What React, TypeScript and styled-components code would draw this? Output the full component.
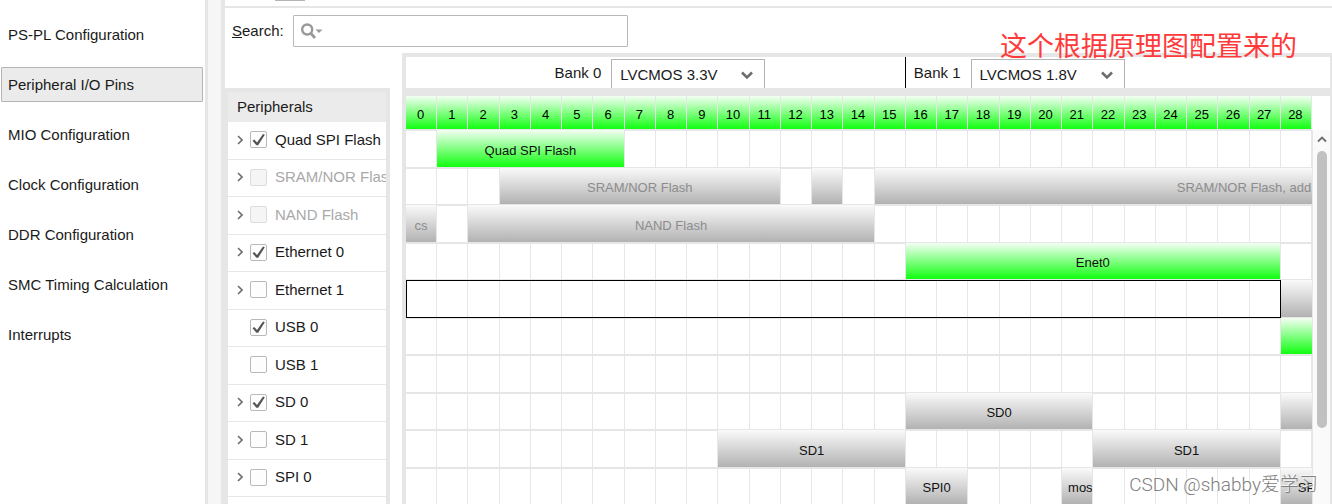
import React from "react";
import styled, { createGlobalStyle, css } from "styled-components";

const LINE = "#e6e6e6";
const COLUMNS = 29;

const GlobalStyle = createGlobalStyle`
  *, *::before, *::after { box-sizing: border-box; }
  body {
    margin: 0;
    background: #fff;
    color: #1a1a1a;
    font: 15px/20px "Liberation Sans", Arial, "Noto Sans CJK SC", sans-serif;
    overflow: hidden;
  }
  button, input, select { font: inherit; color: inherit; }
`;

const Page = styled.div`
  position: relative;
  display: flex;
  height: 100vh;
  overflow: hidden;
`;

const Nav = styled.nav`
  flex: 0 0 205px;
  display: flex;
  flex-direction: column;
  gap: 15px;
  padding: 17px 2px 0 1px;
`;

const NavItem = styled.button<{ $active?: boolean }>`
  height: 35px;
  padding: 0 6px;
  text-align: left;
  white-space: nowrap;
  border: 1px solid ${(p) => (p.$active ? "#b4b4b4" : "transparent")};
  border-radius: 1px;
  background: ${(p) => (p.$active ? "#ebebeb" : "transparent")};
`;

const Splitter = styled.div`
  flex: 0 0 20px;
  background: #f6f6f6;
  border-left: 3px solid ${LINE};
  border-right: 4px solid ${LINE};
`;

const Main = styled.main`
  flex: 1;
  min-width: 0;
  display: flex;
  flex-direction: column;
`;

const TopStrip = styled.div`
  flex: 0 0 8px;
  border-bottom: 2px solid ${LINE};
  padding-left: 50px;
`;

const ToolEdge = styled.div`
  width: 30px;
  height: 1px;
  background: #b4b4b4;
`;

const SearchRow = styled.div`
  flex: 0 0 45px;
  display: flex;
  align-items: center;
  gap: 9px;
  padding: 0 8px 0 7px;
`;

const SearchLabel = styled.label`
  white-space: nowrap;
`;

const SearchBox = styled.div`
  display: flex;
  align-items: center;
  width: 335px;
  height: 32px;
  padding-left: 6px;
  border: 1px solid #b8b8b8;
  border-radius: 1px;
`;

const SearchInput = styled.input`
  flex: 1;
  min-width: 0;
  border: 0;
  outline: 0;
  background: transparent;
`;

const Panels = styled.div`
  flex: 1;
  min-height: 0;
  display: flex;
  gap: 12px;
`;

const PeripheralPanel = styled.section`
  flex: 0 0 165px;
  margin-top: 35px;
  border: solid ${LINE};
  border-width: 4px 4px 0 3px;
  overflow: hidden;
`;

const PeripheralTitle = styled.h2`
  height: 30px;
  margin: 0;
  padding: 0 9px;
  font-size: 15px;
  line-height: 30px;
  font-weight: 400;
  background: #ebebeb;
`;

const PeripheralList = styled.ul`
  display: grid;
  grid-auto-rows: 38px 37px;
  margin: 0;
  padding: 0;
  list-style: none;
`;

const PeripheralRow = styled.li`
  display: grid;
  grid-template-columns: 6px 17px 1fr;
  align-items: center;
  column-gap: 7px;
  padding: 0 0 2px 9px;
  overflow: hidden;
  border-bottom: 1px solid ${LINE};
`;

const Expander = styled.button`
  display: flex;
  padding: 0;
  border: 0;
  background: none;
`;

const CheckBox = styled.input`
  appearance: none;
  grid-column: 2;
  width: 17px;
  height: 17px;
  margin: 0;
  border: 1px solid #b9b9b9;
  border-radius: 2px;
  background: #fdfdfd;
  &:disabled {
    border-color: #dcdcdc;
    background: #f5f5f5;
  }
  &:checked::after {
    content: "";
    display: block;
    width: 15px;
    height: 15px;
    background: #555;
    clip-path: polygon(10% 58%, 22% 50%, 40% 70%, 80% 14%, 92% 18%, 48% 88%, 36% 88%);
  }
`;

const PeripheralName = styled.label<{ $disabled?: boolean }>`
  padding-left: 1px;
  white-space: nowrap;
  color: ${(p) => (p.$disabled ? "#a9a9a9" : "inherit")};
`;

const PinPanel = styled.section`
  flex: 1;
  min-width: 0;
  display: flex;
  flex-direction: column;
  border: solid ${LINE};
  border-width: 4px 2px 0 4px;
`;

const BankBar = styled.div`
  flex: 0 0 39px;
  display: grid;
  grid-template-columns: 16fr 13fr;
  padding-right: 18px;
  border-bottom: 8px solid ${LINE};
`;

const Bank = styled.div<{ $divided?: boolean }>`
  display: flex;
  align-items: center;
  gap: 10px;
  padding-left: 8px;
  ${(p) =>
    p.$divided
      ? css`
          margin-left: -1px;
          border-left: 1px solid #000;
        `
      : css`
          justify-content: center;
        `}
`;

const SelectBox = styled.div`
  display: grid;
  align-self: end;
  width: 154px;
  height: 29px;
  & > * { grid-area: 1 / 1; }
  & > svg {
    align-self: center;
    justify-self: end;
    margin: 4px 12px 0 0;
    pointer-events: none;
  }
`;

const Select = styled.select`
  appearance: none;
  width: 100%;
  padding: 2px 30px 0 8px;
  border: solid #b4b4b4;
  border-width: 1px 1px 0;
  border-radius: 0;
  background: #fff;
`;

const PinArea = styled.div`
  flex: 1;
  min-height: 0;
  display: flex;
  overflow: hidden;
`;

const PinTable = styled.table`
  display: block;
  flex: 1;
  min-width: 0;
  overflow: hidden;
  font-size: 13px;
  line-height: 16px;
  thead { display: block; }
  tbody {
    display: grid;
    grid-auto-rows: 38px 37px;
  }
`;

const PinRow = styled.tr<{ $selected?: boolean }>`
  position: relative;
  display: grid;
  grid-template-columns: repeat(${COLUMNS}, minmax(0, 1fr));
  background: ${LINE};
  ${(p) =>
    p.$selected &&
    css`
      &::after {
        content: "";
        position: absolute;
        inset: 0;
        right: calc(100% / ${COLUMNS});
        border: 1px solid #000;
      }
    `}
`;

const PinNumber = styled.th`
  height: 33px;
  margin: 0 1px 1px 0;
  padding: 11px 1px 0 0;
  font-weight: 400;
  color: #000;
  background: linear-gradient(#f4fff4, #10ff10);
`;

type Tone = "green" | "gray" | "muted";

const EmptyPin = styled.td`
  margin: 1px 1px 1px 0;
  padding: 0;
  background: #fff;
`;

const Signal = styled.td<{ $tone: Tone; $span: number; $indent?: string }>`
  display: flex;
  align-items: center;
  justify-content: ${(p) => (p.$indent ? "flex-start" : "center")};
  grid-column: span ${(p) => p.$span};
  margin: 0 0 1px;
  padding: 4px 0 0 ${(p) => p.$indent || "0"};
  overflow: hidden;
  white-space: nowrap;
  border-right: 1px solid ${LINE};
  color: ${(p) => (p.$tone === "muted" ? "#8c8c8c" : "#111")};
  background: ${(p) =>
    p.$tone === "green"
      ? "linear-gradient(#f4fff4, #10ff10)"
      : "linear-gradient(#fafafa, #b2b2b2)"};
  &:last-child { border-right: 0; }
`;

const ScrollBar = styled.div`
  flex: 0 0 18px;
  display: flex;
  flex-direction: column;
  align-items: center;
  margin-top: 34px;
  padding-top: 5px;
  gap: 8px;
  background: #fafafa;
  border-left: 1px solid ${LINE};
`;

const ScrollThumb = styled.div`
  width: 10px;
  height: 75%;
  border-radius: 5px;
  background: #c1c1c1;
`;

const Note = styled.div`
  position: absolute;
  top: 25px;
  right: 35px;
  font: 27px/40px "Noto Sans CJK SC", sans-serif;
  color: #ff3a3a;
`;

const Watermark = styled.div`
  position: absolute;
  right: 14px;
  bottom: 4px;
  font: 300 19px/30px Roboto, "Noto Sans CJK SC", sans-serif;
  color: #808080;
  text-shadow: -1px -1px 0 rgba(255, 255, 255, 0.7);
`;

interface ChevronProps {
  d: string;
  w: number;
  h: number;
  stroke: number;
}

const Chevron = ({ d, w, h, stroke }: ChevronProps) => (
  <svg width={w} height={h} viewBox={`0 0 ${w} ${h}`} fill="none" stroke="#6e6e6e" strokeWidth={stroke} aria-hidden>
    <path d={d} />
  </svg>
);

const SearchIcon = () => (
  <svg width="24" height="18" viewBox="0 0 24 18" fill="none" aria-hidden>
    <circle cx="7.2" cy="7.5" r="5" stroke="#999" strokeWidth="2.4" />
    <path d="M11 11.5l4 4.5" stroke="#999" strokeWidth="2.8" />
    <path d="M15.5 7.5h7l-3.500 3.500z" fill="#999" />
  </svg>
);

const navItems = [
  "PS-PL Configuration",
  "Peripheral I/O Pins",
  "MIO Configuration",
  "Clock Configuration",
  "DDR Configuration",
  "SMC Timing Calculation",
  "Interrupts",
];

interface Peripheral {
  name: string;
  checked?: boolean;
  disabled?: boolean;
  leaf?: boolean;
}

const peripherals: Peripheral[] = [
  { name: "Quad SPI Flash", checked: true },
  { name: "SRAM/NOR Flash", disabled: true },
  { name: "NAND Flash", disabled: true },
  { name: "Ethernet 0", checked: true },
  { name: "Ethernet 1" },
  { name: "USB 0", checked: true, leaf: true },
  { name: "USB 1", leaf: true },
  { name: "SD 0", checked: true },
  { name: "SD 1" },
  { name: "SPI 0" },
];

interface Block {
  start: number;
  span: number;
  tone: Tone;
  text?: string;
  indent?: string;
}

const pinRows: Block[][] = [
  [{ start: 1, span: 6, tone: "green", text: "Quad SPI Flash" }],
  [
    { start: 3, span: 9, tone: "muted", text: "SRAM/NOR Flash" },
    { start: 13, span: 1, tone: "muted" },
    { start: 15, span: 14, tone: "muted", text: "SRAM/NOR Flash, add", indent: "calc(70% - 4px)" },
  ],
  [
    { start: 0, span: 1, tone: "muted", text: "cs" },
    { start: 2, span: 13, tone: "muted", text: "NAND Flash" },
  ],
  [{ start: 16, span: 12, tone: "green", text: "Enet0" }],
  [{ start: 28, span: 1, tone: "gray" }],
  [{ start: 28, span: 1, tone: "green" }],
  [],
  [
    { start: 16, span: 6, tone: "gray", text: "SD0" },
    { start: 28, span: 1, tone: "gray" },
  ],
  [
    { start: 10, span: 6, tone: "gray", text: "SD1" },
    { start: 22, span: 6, tone: "gray", text: "SD1" },
  ],
  [
    { start: 16, span: 2, tone: "gray", text: "SPI0" },
    { start: 21, span: 1, tone: "gray", text: "mos", indent: "6px" },
    { start: 28, span: 1, tone: "gray", text: "SP", indent: "17px" },
  ],
];

const SELECTED_ROW = 4;

function renderPins(blocks: Block[]) {
  const cells: React.ReactNode[] = [];
  let pin = 0;
  while (pin < COLUMNS) {
    const block = blocks.find((b) => b.start === pin);
    if (block) {
      cells.push(
        <Signal key={pin} colSpan={block.span} $span={block.span} $tone={block.tone} $indent={block.indent}>
          {block.text}
        </Signal>
      );
      pin += block.span;
    } else {
      cells.push(<EmptyPin key={pin} />);
      pin += 1;
    }
  }
  return cells;
}

function BankSelect({ id, label, value, divided }: { id: string; label: string; value: string; divided?: boolean }) {
  return (
    <Bank $divided={divided}>
      <label htmlFor={id}>{label}</label>
      <SelectBox>
        <Select id={id} defaultValue={value}>
          <option>{value}</option>
        </Select>
        <Chevron w={12} h={9} d="M1 1.500l5 5l5-5" stroke={2.6} />
      </SelectBox>
    </Bank>
  );
}

export default function App() {
  return (
    <Page>
      <GlobalStyle />
      <Nav>
        {navItems.map((item, i) => (
          <NavItem key={item} $active={i === 1}>
            {item}
          </NavItem>
        ))}
      </Nav>
      <Splitter />
      <Main>
        <TopStrip>
          <ToolEdge />
        </TopStrip>
        <SearchRow>
          <SearchLabel htmlFor="search">
            <u>S</u>earch:
          </SearchLabel>
          <SearchBox>
            <SearchIcon />
            <SearchInput id="search" type="text" />
          </SearchBox>
        </SearchRow>
        <Panels>
          <PeripheralPanel>
            <PeripheralTitle>Peripherals</PeripheralTitle>
            <PeripheralList>
              {peripherals.map((p, i) => (
                <PeripheralRow key={p.name}>
                  {!p.leaf && (
                    <Expander aria-label={`Expand ${p.name}`}>
                      <Chevron w={6} h={10} d="M1 1l4 4l-4 4" stroke={1.6} />
                    </Expander>
                  )}
                  <CheckBox id={`p${i}`} type="checkbox" defaultChecked={p.checked} disabled={p.disabled} />
                  <PeripheralName htmlFor={`p${i}`} $disabled={p.disabled}>
                    {p.name}
                  </PeripheralName>
                </PeripheralRow>
              ))}
            </PeripheralList>
          </PeripheralPanel>
          <PinPanel>
            <BankBar>
              <BankSelect id="bank0" label="Bank 0" value="LVCMOS 3.3V" />
              <BankSelect id="bank1" label="Bank 1" value="LVCMOS 1.8V" divided />
            </BankBar>
            <PinArea>
              <PinTable>
                <thead>
                  <PinRow>
                    {Array.from({ length: COLUMNS }, (_, n) => (
                      <PinNumber key={n} scope="col">
                        {n}
                      </PinNumber>
                    ))}
                  </PinRow>
                </thead>
                <tbody>
                  {pinRows.map((blocks, i) => (
                    <PinRow key={i} $selected={i === SELECTED_ROW}>
                      {renderPins(blocks)}
                    </PinRow>
                  ))}
                </tbody>
              </PinTable>
              <ScrollBar>
                <Chevron w={10} h={8} d="M1 6.500l4-4l4 4" stroke={1.8} />
                <ScrollThumb />
              </ScrollBar>
            </PinArea>
          </PinPanel>
        </Panels>
      </Main>
      <Note>这个根据原理图配置来的</Note>
      <Watermark>CSDN @shabby爱学习</Watermark>
    </Page>
  );
}
